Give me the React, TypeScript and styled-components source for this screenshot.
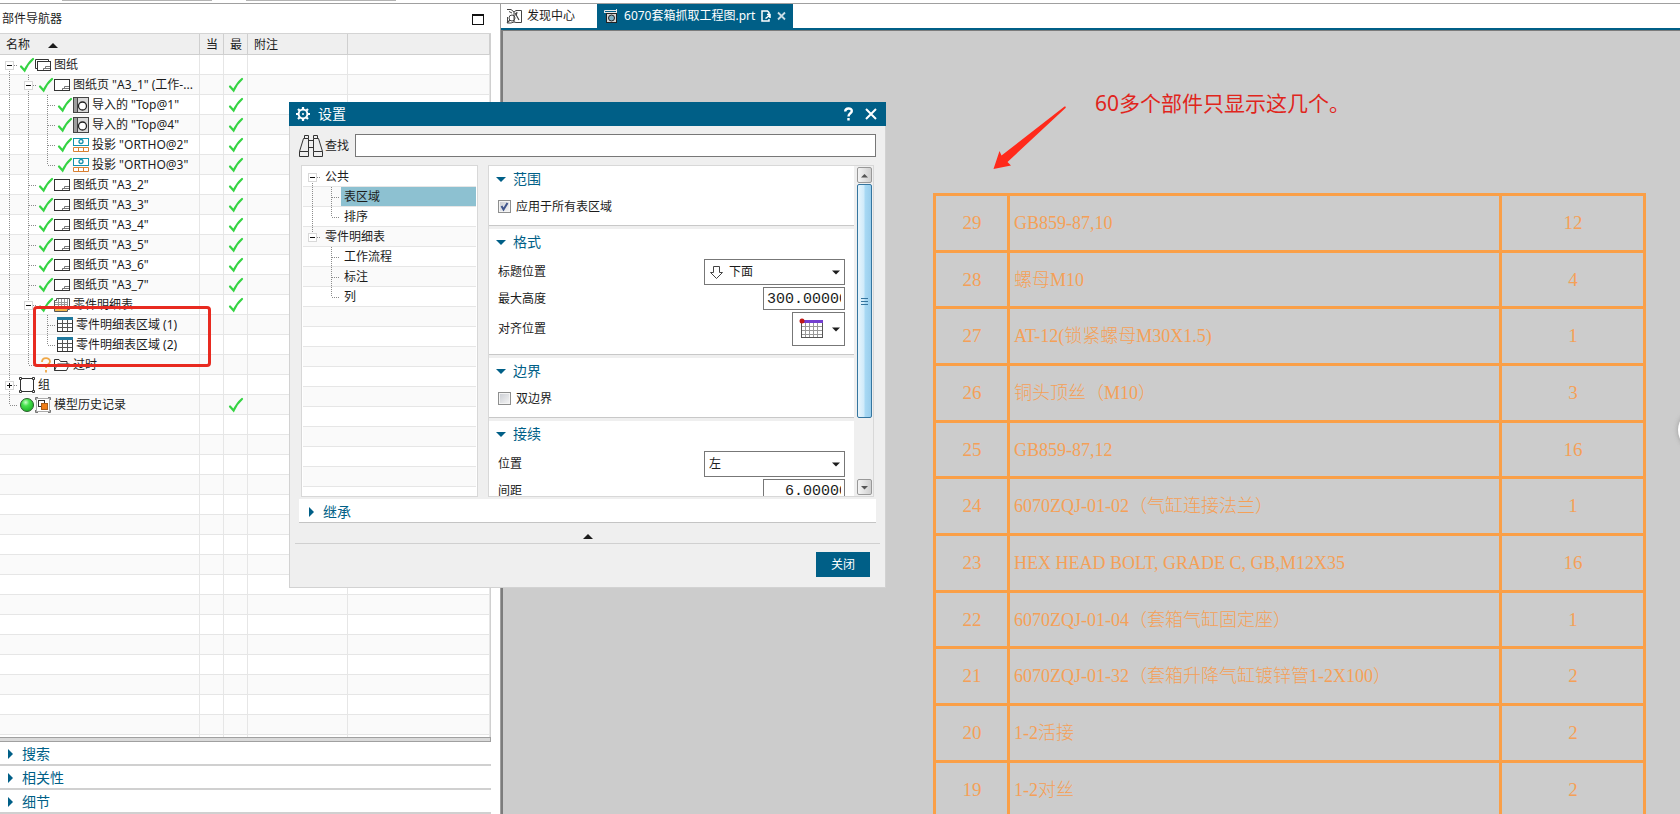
import React from 'react';
import styled, { createGlobalStyle } from 'styled-components';

const TEAL = '#005f87';
const INK = '#1c1c1c';
const UI_FONT = '"Noto Sans", "Noto Sans CJK SC", sans-serif';

const GlobalStyle = createGlobalStyle`
  * { box-sizing: border-box; }
  body {
    margin: 0;
    background: #fff;
    color: ${INK};
    font-family: ${UI_FONT};
    font-size: 12px;
    line-height: 16px;
    overflow: hidden;
  }
  button, input, select { font: inherit; color: inherit; }
  button { border: 0; padding: 0; background: none; }
  svg { display: block; flex: none; }
`;

/* ---------- frame ---------- */

const Page = styled.div`
  position: relative;
  display: flex;
  flex-direction: column;
  height: 100vh;
`;

const Ribbon = styled.div`
  display: flex;
  gap: 34px;
  flex: none;
  height: 4px;
  padding-left: 62px;
  border-bottom: 1px solid #a0a0a0;
`;

const RibbonGroup = styled.div`
  width: 150px;
  height: 1px;
  background: #b4b4b4;
`;

const Workspace = styled.div`
  display: flex;
  flex: 1;
  min-height: 0;
`;

/* ---------- icons ---------- */

const GreenCheck = () => (
  <svg width="16" height="16" viewBox="0 0 16 16" aria-hidden="true">
    <path d="M2 9.5 L5.6 13.5 C8 8.5 10.5 5 14 2" fill="none" stroke="#35d343" strokeWidth="2.2" strokeLinecap="round" />
  </svg>
);

const SheetIcon = () => (
  <svg width="16" height="16" viewBox="0 0 16 16" aria-hidden="true">
    <rect x="0.5" y="2.5" width="15" height="11" fill="#fff" stroke="#333" />
    <path d="M8.5 13V11.5H10.5V9.5H15M8.5 11.5H15" fill="none" stroke="#777" />
  </svg>
);

const SheetsIcon = () => (
  <svg width="16" height="16" viewBox="0 0 16 16" aria-hidden="true">
    <path d="M2.5 11.5H0.5V2.5H13.5V4" fill="none" stroke="#333" />
    <rect x="2.5" y="4.5" width="13" height="9" fill="#fff" stroke="#333" />
    <path d="M8.5 13V11.5H10.5V9.5H15M8.5 11.5H15" fill="none" stroke="#777" />
  </svg>
);

const ImportedIcon = () => (
  <svg width="16" height="16" viewBox="0 0 16 16" aria-hidden="true">
    <rect x="0.5" y="0.5" width="15" height="15" fill="#d9d9d9" stroke="#444" />
    <rect x="1" y="1" width="3" height="14" fill="#9e9e9e" />
    <path d="M4.5 1V15" stroke="#444" fill="none" />
    <circle cx="9.5" cy="9" r="4" fill="#fff" stroke="#222" strokeWidth="1.3" />
  </svg>
);

const ProjectionIcon = () => (
  <svg width="16" height="16" viewBox="0 0 16 16" aria-hidden="true">
    <rect x="0.5" y="1.5" width="15" height="7" fill="#fff" stroke="#1593ad" />
    <circle cx="8" cy="4.5" r="2" fill="#fff" stroke="#1593ad" strokeWidth="1.3" />
    <path d="M0.5 10.5H15.5V14.5H0.5ZM5.5 11V14.5M10.5 11V14.5" fill="#fff" stroke="#d98134" />
  </svg>
);

const PartsListIcon = () => (
  <svg width="16" height="16" viewBox="0 0 16 16" aria-hidden="true">
    <path d="M0.5 14.5V3.5H2.5V1.5H15.5V12.5H13.5V14.5Z" fill="#fff" stroke="#555" />
    <path d="M1 11H13V14H1Z" fill="#f0b54c" />
    <path d="M1 5.5H13M1 7.5H13M1 9.5H13M4.5 2V11M7.5 2V11M10.5 2V11M13.5 2V12" stroke="#999" fill="none" />
  </svg>
);

const GridIcon = () => (
  <svg width="16" height="16" viewBox="0 0 16 16" aria-hidden="true">
    <rect x="0.5" y="1.5" width="15" height="13" fill="#fff" stroke="#333" />
    <rect x="0" y="0" width="16" height="3" fill="#20789c" />
    <path d="M1 6.5H15M1 10.5H15M5.5 3V14M10.5 3V14" stroke="#555" fill="none" />
  </svg>
);

const FolderIcon = () => (
  <svg width="16" height="16" viewBox="0 0 16 16" aria-hidden="true">
    <path d="M0.5 13.5V2.5H5L6.5 4.5H13V7M0.5 13.5L3.5 7H15.5L12.5 13.5Z" fill="#fff" stroke="#333" />
  </svg>
);

const QuestionIcon = () => (
  <svg width="16" height="16" viewBox="0 0 16 16" aria-hidden="true">
    <path d="M4 5C4 0 12 0 12 4.5C12 7.5 8 7 8 11M8 13V15.5" fill="none" stroke="#f0a848" strokeWidth="1.8" />
  </svg>
);

const GroupIcon = () => (
  <svg width="16" height="16" viewBox="0 0 16 16" aria-hidden="true">
    <rect x="1.5" y="1.5" width="13" height="13" fill="#fff" stroke="#333" />
    <path d="M0.5 0.5H2.5V2.5H0.5ZM13.5 0.5H15.5V2.5H13.5ZM0.5 13.5H2.5V15.5H0.5ZM13.5 13.5H15.5V15.5H13.5Z" fill="#fff" stroke="#333" />
  </svg>
);

const GreenBallIcon = () => (
  <svg width="16" height="16" viewBox="0 0 16 16" aria-hidden="true">
    <defs>
      <radialGradient id="ball" cx="0.4" cy="0.3" r="0.7">
        <stop offset="0" stopColor="#c8ffc8" />
        <stop offset="0.4" stopColor="#45e24c" />
        <stop offset="1" stopColor="#1fb32b" />
      </radialGradient>
    </defs>
    <circle cx="8" cy="8" r="6.5" fill="url(#ball)" stroke="#2a5f2c" />
  </svg>
);

const HistoryIcon = () => (
  <svg width="16" height="16" viewBox="0 0 16 16" aria-hidden="true">
    <rect x="1.5" y="1.5" width="13" height="13" fill="#fff" stroke="#aaa" />
    <path d="M0.5 3V0.5H3M13 0.5H15.5V3M0.5 13V15.5H3M13 15.5H15.5V13" fill="none" stroke="#777" />
    <rect x="3.5" y="3.5" width="6" height="6" fill="#fff" stroke="#333" />
    <rect x="6.5" y="6.5" width="6" height="6" fill="#ef7d16" stroke="#a85a18" />
  </svg>
);

const Caret = ({ dir, color = INK, size = 10 }: { dir: 'up' | 'down' | 'right'; color?: string; size?: number }) => {
  const d = { up: 'M0 8L5 3L10 8Z', down: 'M0 3L5 8L10 3Z', right: 'M2 0L7 5L2 10Z' }[dir];
  return (
    <svg width={size} height={size} viewBox="0 0 10 10" aria-hidden="true">
      <path d={d} fill={color} />
    </svg>
  );
};

/* ---------- tree connectors ---------- */

type Guide = 'v' | 'tee' | 'elbow' | 'open-first' | 'open' | 'open-last' | 'closed';

const Toggle = styled.button`
  flex: none;
  width: 19px;
  height: 20px;
`;

const GuideLines = ({ kind }: { kind: Guide }) => {
  const box = kind.startsWith('open') || kind === 'closed';
  const up = kind !== 'open-first';
  const down = kind !== 'elbow' && kind !== 'open-last';
  return (
    <svg width="19" height="20" viewBox="0 0 19 20" aria-hidden="true">
      <g stroke="#8c8c8c" strokeDasharray="1 1" fill="none">
        {up && <path d="M9.5 0V10" />}
        {down && <path d="M9.5 10V20" />}
        {kind !== 'v' && <path d="M10 10.5H18" />}
      </g>
      {box && (
        <>
          <rect x="5.5" y="6.5" width="8" height="8" fill="#fff" stroke="#d8d8d8" />
          <path d={kind === 'closed' ? 'M7 10.5H12M9.5 8V13' : 'M7 10.5H12'} stroke="#111" fill="none" />
        </>
      )}
    </svg>
  );
};

const Connector = ({ kind }: { kind: Guide }) =>
  kind.startsWith('open') || kind === 'closed' ? (
    <Toggle type="button" aria-label={kind === 'closed' ? '展开' : '折叠'}>
      <GuideLines kind={kind} />
    </Toggle>
  ) : (
    <GuideLines kind={kind} />
  );

/* ---------- part navigator ---------- */

const Navigator = styled.aside`
  position: relative;
  display: flex;
  flex-direction: column;
  flex: none;
  width: 500px;
  padding-right: 9px;
`;

const NavTitle = styled.header`
  display: flex;
  align-items: center;
  justify-content: space-between;
  flex: none;
  height: 30px;
  padding: 1px 7px 0 2px;
  border-bottom: 1px solid #d4d4d4;
`;

const MaximizeButton = styled.button`
  width: 12px;
  height: 11px;
  border: 1px solid #111;
  border-top-width: 2px;
`;

const TreeArea = styled.div`
  flex: 1;
  min-height: 0;
  overflow: hidden;
  border-right: 1px solid #d0d0d0;
`;

const TreeTable = styled.table`
  width: 100%;
  table-layout: fixed;
  border-spacing: 0;
  col:nth-child(1) { width: 200px; }
  col:nth-child(2), col:nth-child(3) { width: 24px; }
  col:nth-child(4) { width: 100px; }
`;

const HeadCell = styled.th`
  height: 21px;
  padding: 0 6px;
  background: #efefef;
  box-shadow: inset -1px -1px #cfcfcf;
  font-weight: 400;
  text-align: left;
  white-space: nowrap;
`;

const SortHead = styled.div`
  display: flex;
  align-items: center;
  gap: 18px;
`;

const TreeRow = styled.tr`
  &:nth-child(even) { background: #fafafa; }
`;

const TreeCell = styled.td`
  height: 20px;
  padding: 0;
  box-shadow: inset -1px -1px #e6e6e6;
`;

const NameCell = styled.div`
  display: flex;
  align-items: center;
  height: 20px;
  white-space: nowrap;
`;

const NodeText = styled.span`
  padding-left: 3px;
`;

const Latest = styled.div`
  display: flex;
  justify-content: center;
`;

const Splitter = styled.div`
  flex: none;
  height: 5px;
  border: 1px solid #a0a0a0;
  border-width: 1px 1px 1px 0;
  background: #dadada;
`;

const FoldBar = styled.button`
  display: flex;
  align-items: center;
  gap: 6px;
  flex: none;
  height: 24px;
  padding: 2px 0 0 6px;
  border-bottom: 2px solid #d0d0d0;
  color: ${TEAL};
  font-size: 14px;
`;

const RedFrame = styled.div`
  position: absolute;
  left: 33px;
  top: 302px;
  width: 178px;
  height: 61px;
  border: 3px solid #e82a20;
  border-radius: 4px;
`;

type Node = { guides: Guide[]; icons: React.FC[]; text: string; latest?: boolean };

const sheet = (n: number): Node => ({
  guides: ['v', 'tee'],
  icons: [GreenCheck, SheetIcon],
  text: `图纸页 "A3_${n}"`,
  latest: true,
});

const nodes: Node[] = [
  { guides: ['open-first'], icons: [GreenCheck, SheetsIcon], text: '图纸' },
  { guides: ['v', 'open'], icons: [GreenCheck, SheetIcon], text: '图纸页 "A3_1" (工作-...', latest: true },
  { guides: ['v', 'v', 'tee'], icons: [GreenCheck, ImportedIcon], text: '导入的 "Top@1"', latest: true },
  { guides: ['v', 'v', 'tee'], icons: [GreenCheck, ImportedIcon], text: '导入的 "Top@4"', latest: true },
  { guides: ['v', 'v', 'tee'], icons: [GreenCheck, ProjectionIcon], text: '投影 "ORTHO@2"', latest: true },
  { guides: ['v', 'v', 'elbow'], icons: [GreenCheck, ProjectionIcon], text: '投影 "ORTHO@3"', latest: true },
  ...[2, 3, 4, 5, 6, 7].map(sheet),
  { guides: ['v', 'open'], icons: [GreenCheck, PartsListIcon], text: '零件明细表', latest: true },
  { guides: ['v', 'v', 'tee'], icons: [GridIcon], text: '零件明细表区域 (1)' },
  { guides: ['v', 'v', 'elbow'], icons: [GridIcon], text: '零件明细表区域 (2)' },
  { guides: ['v', 'elbow'], icons: [QuestionIcon, FolderIcon], text: '过时' },
  { guides: ['closed'], icons: [GroupIcon], text: '组' },
  { guides: ['elbow'], icons: [GreenBallIcon, HistoryIcon], text: '模型历史记录', latest: true },
];

const EMPTY_ROWS = 40;

const PartNavigator = () => (
  <Navigator>
    <NavTitle>
      部件导航器
      <MaximizeButton type="button" aria-label="最大化" />
    </NavTitle>
    <TreeArea>
      <TreeTable>
        <colgroup><col /><col /><col /><col /><col /></colgroup>
        <thead>
          <tr>
            <HeadCell><SortHead>名称<Caret dir="up" /></SortHead></HeadCell>
            <HeadCell>当</HeadCell>
            <HeadCell>最</HeadCell>
            <HeadCell>附注</HeadCell>
            <HeadCell />
          </tr>
        </thead>
        <tbody>
          {nodes.map((node) => (
            <TreeRow key={node.text}>
              <TreeCell>
                <NameCell>
                  {node.guides.map((kind, i) => <Connector key={i} kind={kind} />)}
                  {node.icons.map((Icon, i) => <Icon key={i} />)}
                  <NodeText>{node.text}</NodeText>
                </NameCell>
              </TreeCell>
              <TreeCell />
              <TreeCell>{node.latest && <Latest><GreenCheck /></Latest>}</TreeCell>
              <TreeCell />
              <TreeCell />
            </TreeRow>
          ))}
          {Array.from({ length: EMPTY_ROWS }, (_, i) => (
            <TreeRow key={i}><TreeCell /><TreeCell /><TreeCell /><TreeCell /><TreeCell /></TreeRow>
          ))}
        </tbody>
      </TreeTable>
    </TreeArea>
    <Splitter />
    {['搜索', '相关性', '细节'].map((name) => (
      <FoldBar key={name} type="button"><Caret dir="right" color={TEAL} />{name}</FoldBar>
    ))}
    <RedFrame />
  </Navigator>
);

/* ---------- drawing window ---------- */

const DrawingWindow = styled.main`
  display: flex;
  flex-direction: column;
  flex: 1;
  min-width: 0;
  border-left: 1px solid #a0a0a0;
`;

const TabBar = styled.nav`
  display: flex;
  flex: none;
  height: 26px;
  border-bottom: 2px solid ${TEAL};
`;

const Tab = styled.button<{ $active?: boolean }>`
  display: flex;
  align-items: center;
  gap: ${(p) => (p.$active ? 6 : 4)}px;
  padding: 0 ${(p) => (p.$active ? 7 : 22)}px 0 ${(p) => (p.$active ? 7 : 5)}px;
  background: ${(p) => (p.$active ? TEAL : '#fff')};
  color: ${(p) => (p.$active ? '#fff' : INK)};
`;

const Canvas = styled.div`
  position: relative;
  flex: 1;
  min-height: 0;
  overflow: hidden;
  padding: 162px 34px 0 430px;
  border: 1px solid #7c7c7c;
  border-width: 1px 0 0 2px;
  background: #ccc;
`;

const BomTable = styled.table`
  width: 100%;
  table-layout: fixed;
  border-collapse: collapse;
  color: #f5a057;
  font-family: "Liberation Serif", "Noto Sans CJK SC", serif;
  font-size: 18px;
  font-weight: 300;
  line-height: 24px;
  col:first-child { width: 74px; }
  col:last-child { width: 144px; }
  tr { height: 57px; }
  tr:nth-child(3n + 2) { height: 56px; }
`;

const BomCell = styled.td<{ $number?: boolean }>`
  padding: 0 0 0 ${(p) => (p.$number ? 1 : 4)}px;
  border: 3px solid #fa9f47;
  font-size: ${(p) => (p.$number ? 19 : 18)}px;
  text-align: ${(p) => (p.$number ? 'center' : 'left')};
  white-space: nowrap;
`;

const Note = styled.p`
  position: absolute;
  left: 592px;
  top: 58px;
  margin: 0;
  color: #e0251c;
  font-size: 21px;
  line-height: 28px;
`;

const Arrow = styled.svg`
  position: absolute;
  left: 490px;
  top: 75px;
`;

const EdgeKnob = styled.button`
  position: absolute;
  right: -38px;
  top: 379px;
  width: 40px;
  height: 40px;
  border-radius: 50%;
  background: #fff;
  box-shadow: 0 0 5px #999;
`;

const bom: [number, string, number][] = [
  [29, 'GB859-87,10', 12],
  [28, '螺母M10', 4],
  [27, 'AT-12(锁紧螺母M30X1.5)', 1],
  [26, '铜头顶丝（M10）', 3],
  [25, 'GB859-87,12', 16],
  [24, '6070ZQJ-01-02（气缸连接法兰）', 1],
  [23, 'HEX HEAD BOLT, GRADE C, GB,M12X35', 16],
  [22, '6070ZQJ-01-04（套箱气缸固定座）', 1],
  [21, '6070ZQJ-01-32（套箱升降气缸镀锌管1-2X100）', 2],
  [20, '1-2活接', 2],
  [19, '1-2对丝', 2],
];

const Drawing = () => (
  <DrawingWindow>
    <TabBar>
      <Tab type="button">
        <svg width="17" height="16" viewBox="0 0 17 16" fill="none" stroke="#444" aria-hidden="true">
          <path d="M1 1.5H5L8 4V14L5 15H1.5V9M8 4L10 2.5H15.5V14.5H10L8 14M3 3.5L6 5" />
          <circle cx="6" cy="10" r="3" />
          <path d="M4 12L1 15M9 5L13 12M11 4L10 8" strokeWidth="1.2" />
        </svg>
        发现中心
      </Tab>
      <Tab type="button" $active>
        <svg width="14" height="16" viewBox="0 0 14 16" aria-hidden="true">
          <path d="M0.5 5V2.5H13M1 4.5H12M12.5 1V5" stroke="#e8e8e8" fill="none" />
          <rect x="2.5" y="5.5" width="10" height="9" fill="#d6d6d6" stroke="#222" />
          <circle cx="7.5" cy="10" r="3" fill="#7fb3c6" stroke="#222" />
        </svg>
        6070套箱抓取工程图.prt
        <svg width="10" height="12" viewBox="0 0 10 12" fill="none" stroke="#fff" strokeWidth="1.5" aria-hidden="true">
          <path d="M8 4V2.5L6.5 1H1V11H8V9M4.5 8.5L8.5 5.5M6 4.5H9V8" />
        </svg>
        <svg width="9" height="10" viewBox="0 0 9 10" stroke="#c9dde6" strokeWidth="1.8" aria-hidden="true">
          <path d="M1 1.5L8 8.5M8 1.5L1 8.5" />
        </svg>
      </Tab>
    </TabBar>
    <Canvas>
      <BomTable>
        <colgroup><col /><col /><col /></colgroup>
        <tbody>
          {bom.map(([no, name, qty]) => (
            <tr key={no}>
              <BomCell $number>{no}</BomCell>
              <BomCell>{name}</BomCell>
              <BomCell $number>{qty}</BomCell>
            </tr>
          ))}
        </tbody>
      </BomTable>
      <Arrow width="74" height="64" viewBox="0 0 74 64" aria-hidden="true">
        <path d="M0.5 63L6.5 45L8.5 49.5L71.5 0.5Q73.5 0 72.5 2L14.5 56L18 59.5Z" fill="#ff2a1b" />
      </Arrow>
      <Note>60多个部件只显示这几个。</Note>
      <EdgeKnob type="button" aria-label="资源条" />
    </Canvas>
  </DrawingWindow>
);

/* ---------- settings dialog ---------- */

const Dialog = styled.section`
  position: absolute;
  left: 289px;
  top: 102px;
  width: 597px;
  border: 1px solid #d2d2d2;
  border-top: 0;
  background: #efefef;
`;

const DialogBar = styled.header`
  display: flex;
  align-items: center;
  height: 24px;
  margin: 0 -1px;
  padding: 0 9px 0 7px;
  background: ${TEAL};
  color: #fff;
`;

const DialogTitle = styled.h2`
  flex: 1;
  margin: 0 0 0 8px;
  font-size: 14px;
  font-weight: 400;
`;

const BarButton = styled.button`
  margin-left: 12px;
`;

const DialogBody = styled.div`
  padding: 8px 9px 0;
`;

const SearchRow = styled.div`
  display: flex;
  align-items: center;
  height: 23px;
`;

const SearchLabel = styled.label`
  display: flex;
  align-items: center;
  gap: 2px;
  margin-right: 6px;
`;

const SearchInput = styled.input`
  flex: 1;
  height: 23px;
  border: 1px solid #777;
  background: #fff;
`;

const Panes = styled.div`
  display: flex;
  gap: 10px;
  height: 332px;
  margin: 8px 2px 2px;
`;

const Pane = styled.div<{ $wide?: boolean }>`
  display: flex;
  flex: ${(p) => (p.$wide ? '1' : '0 0 177px')};
  gap: 3px;
  overflow: hidden;
  padding: ${(p) => (p.$wide ? '0 1px 0 0' : '1px 1px 0')};
  border: 1px solid #d8d8d8;
  background: ${(p) => (p.$wide ? '#efefef' : '#fff')};
`;

const TopicList = styled.ul`
  flex: 1;
  margin: 0;
  padding: 0;
  list-style: none;
`;

const Topic = styled.li`
  display: flex;
  height: 20px;
  box-shadow: inset 0 -1px #e6e6e6;
  &:nth-child(even) { background: #fafafa; }
`;

const TopicName = styled.button<{ $selected?: boolean }>`
  flex: 1;
  height: 19px;
  padding-left: 3px;
  background: ${(p) => (p.$selected ? '#8dc1d1' : 'none')};
  text-align: left;
`;

const Groups = styled.div`
  display: flex;
  flex: 1;
  flex-direction: column;
  gap: 3px;
  overflow: hidden;
`;

const GroupBox = styled.section`
  flex: none;
  border-bottom: 1px solid #c8c8c8;
  background: #fff;
`;

const GroupTitle = styled.button`
  display: flex;
  align-items: center;
  gap: 7px;
  height: 26px;
  padding-left: 7px;
  color: ${TEAL};
  font-size: 14px;
`;

const GroupBody = styled.div`
  display: flex;
  flex-direction: column;
  gap: 2px;
  padding: 4px 9px 8px;
`;

const Field = styled.div`
  display: flex;
  align-items: center;
  justify-content: space-between;
`;

const CheckRow = styled.label`
  display: grid;
  grid-template-columns: 13px auto;
  align-items: center;
  gap: 5px;
  height: 21px;
  svg { grid-area: 1 / 1; visibility: hidden; pointer-events: none; }
  input:checked + svg { visibility: visible; }
`;

const CheckBox = styled.input`
  grid-area: 1 / 1;
  appearance: none;
  width: 13px;
  height: 13px;
  margin: 0;
  border: 1px solid #8e8f8f;
  background: linear-gradient(135deg, #c9ccd2, #f6f6f6);
  box-shadow: inset 0 0 0 1px #f4f4f4;
`;

const SelectBox = styled.div`
  display: flex;
  align-items: center;
  gap: 5px;
  width: 141px;
  height: 26px;
  padding: 0 4px;
  border: 1px solid #777;
  background: #fff;
`;

const Select = styled.select`
  flex: 1;
  min-width: 0;
  height: 24px;
  padding: 0;
  border: 0;
  appearance: none;
  background: none;
`;

const NumberInput = styled.input`
  width: 82px;
  height: 23px;
  padding: 2px 3px 0;
  border: 1px solid #777;
  background: #fff;
  font-family: "Liberation Mono", monospace;
  font-size: 15px;
`;

const PickButton = styled.button`
  display: flex;
  align-items: center;
  justify-content: space-between;
  width: 53px;
  height: 34px;
  padding: 0 4px 0 6px;
  border: 1px solid #777;
  background: #fff;
`;

const ScrollTrack = styled.div`
  display: flex;
  flex-direction: column;
  flex: none;
  width: 15px;
  padding: 1px 0;
`;

const ScrollButton = styled.button`
  display: flex;
  align-items: center;
  justify-content: center;
  height: 16px;
  border: 1px solid #989898;
  border-radius: 2px;
  background: linear-gradient(90deg, #f4f4f4, #cfcfcf);
`;

const ScrollThumb = styled.div`
  display: flex;
  flex-direction: column;
  align-items: center;
  justify-content: center;
  gap: 2px;
  height: 234px;
  margin: 1px 0 auto;
  border: 1px solid #34759f;
  border-radius: 2px;
  background: linear-gradient(90deg, #e8f5fc 0%, #d0ebfa 45%, #a8d9f4 55%, #98cdec 100%);
`;

const Grip = styled.i`
  width: 7px;
  height: 1px;
  background: #34759f;
`;

const InheritBar = styled.button`
  display: flex;
  align-items: center;
  gap: 6px;
  width: 100%;
  height: 24px;
  padding: 2px 0 0 8px;
  border-bottom: 1px solid #c4c4c4;
  background: #fff;
  color: ${TEAL};
  font-size: 14px;
`;

const Collapse = styled.button`
  display: flex;
  justify-content: center;
  width: 100%;
  height: 20px;
  padding-top: 8px;
`;

const DialogFooter = styled.footer`
  display: flex;
  justify-content: flex-end;
  margin: 0 5px;
  padding: 8px 10px 10px;
  border-top: 1px solid #d0d0d0;
`;

const CloseButton = styled.button`
  width: 54px;
  height: 25px;
  background: ${TEAL};
  color: #fff;
`;

const topics: { guides: Guide[]; text: string; selected?: boolean }[] = [
  { guides: ['open-first'], text: '公共' },
  { guides: ['v', 'tee'], text: '表区域', selected: true },
  { guides: ['v', 'elbow'], text: '排序' },
  { guides: ['open-last'], text: '零件明细表' },
  { guides: ['tee'], text: '工作流程' },
  { guides: ['tee'], text: '标注' },
  { guides: ['elbow'], text: '列' },
];

const Indent = styled.span`
  width: 19px;
`;

const Group = ({ title, children }: { title: string; children: React.ReactNode }) => (
  <GroupBox>
    <GroupTitle type="button"><Caret dir="down" color={TEAL} />{title}</GroupTitle>
    <GroupBody>{children}</GroupBody>
  </GroupBox>
);

const Check = ({ label, checked }: { label: string; checked?: boolean }) => (
  <CheckRow>
    <CheckBox type="checkbox" defaultChecked={checked} />
    <svg width="13" height="13" viewBox="0 0 13 13" aria-hidden="true">
      <path d="M3.5 6L5.5 9.5L9.5 3" fill="none" stroke="#40558c" strokeWidth="2" />
    </svg>
    {label}
  </CheckRow>
);

const SettingsDialog = () => (
  <Dialog role="dialog" aria-labelledby="settings-title">
    <DialogBar>
      <svg width="14" height="14" viewBox="0 0 14 14" fill="none" stroke="#fff" aria-hidden="true">
        <circle cx="7" cy="7" r="4.4" strokeWidth="2" />
        <circle cx="7" cy="7" r="0.6" fill="#fff" />
        <path d="M7 0V2M7 12V14M0 7H2M12 7H14M2 2L3.5 3.5M10.5 10.5L12 12M12 2L10.5 3.5M3.5 10.5L2 12" strokeWidth="2.2" />
      </svg>
      <DialogTitle id="settings-title">设置</DialogTitle>
      <BarButton type="button" aria-label="帮助">
        <svg width="9" height="14" viewBox="0 0 9 14" fill="none" stroke="#fff" strokeWidth="2.4" aria-hidden="true">
          <path d="M1.2 4.5C1.2 0.5 7.8 0.5 7.8 4C7.8 6.5 4.5 6 4.5 9.5M4.5 11V13.5" />
        </svg>
      </BarButton>
      <BarButton type="button" aria-label="关闭窗口">
        <svg width="12" height="12" viewBox="0 0 12 12" stroke="#fff" strokeWidth="2" aria-hidden="true">
          <path d="M1 1L11 11M11 1L1 11" />
        </svg>
      </BarButton>
    </DialogBar>
    <DialogBody>
      <SearchRow>
        <SearchLabel htmlFor="find">
          <svg width="24" height="22" viewBox="0 0 24 22" fill="none" stroke="#333" aria-hidden="true">
            <path d="M0.5 16.5L4.5 3.5H9.5V16.5M0.5 16.5H9.5V21.5H0.5ZM5.5 3.5V0.5H9.5V3.5M23.5 16.5L19.5 3.5H14.5V16.5M23.5 16.5H14.5V21.5H23.5ZM18.5 3.5V0.5H14.5V3.5M9.5 5.5H14.5M9.5 12.5H14.5" />
          </svg>
          查找
        </SearchLabel>
        <SearchInput id="find" type="text" />
      </SearchRow>
      <Panes>
        <Pane>
          <TopicList>
            {topics.map((topic, i) => (
              <Topic key={topic.text}>
                {i > 3 && <Indent />}
                {topic.guides.map((kind, k) => <Connector key={k} kind={kind} />)}
                <TopicName type="button" $selected={topic.selected}>{topic.text}</TopicName>
              </Topic>
            ))}
            {Array.from({ length: 10 }, (_, i) => <Topic key={i} />)}
          </TopicList>
        </Pane>
        <Pane $wide>
          <Groups>
            <Group title="范围">
              <Check label="应用于所有表区域" checked />
            </Group>
            <Group title="格式">
              <Field>
                <label htmlFor="header-place">标题位置</label>
                <SelectBox>
                  <svg width="15" height="15" viewBox="0 0 15 15" fill="#fff" stroke="#444" aria-hidden="true">
                    <path d="M4.5 1.5H10.5V7.5H13.5L7.5 13.5L1.5 7.5H4.5Z" />
                  </svg>
                  <Select id="header-place"><option>下面</option></Select>
                  <Caret dir="down" size={8} />
                </SelectBox>
              </Field>
              <Field>
                <label htmlFor="max-height">最大高度</label>
                <NumberInput id="max-height" type="text" defaultValue="300.000000" />
              </Field>
              <Field>
                <label htmlFor="align-place">对齐位置</label>
                <PickButton id="align-place" type="button">
                  <svg width="26" height="22" viewBox="0 0 26 22" aria-hidden="true">
                    <rect x="2.5" y="2.5" width="21" height="17" fill="#fff" stroke="#555" />
                    <path d="M3 8.5H23M3 12.5H23M3 16.5H23M6.5 5V19M10.5 5V19M14.5 5V19M18.5 5V19" stroke="#999" />
                    <rect x="2" y="2" width="22" height="3" fill="#7440d0" />
                    <circle cx="3" cy="3" r="2.5" fill="#c01818" />
                  </svg>
                  <Caret dir="down" size={8} />
                </PickButton>
              </Field>
            </Group>
            <Group title="边界">
              <Check label="双边界" />
            </Group>
            <Group title="接续">
              <Field>
                <label htmlFor="place">位置</label>
                <SelectBox>
                  <Select id="place"><option>左</option></Select>
                  <Caret dir="down" size={8} />
                </SelectBox>
              </Field>
              <Field>
                <label htmlFor="spacing">间距</label>
                <NumberInput id="spacing" type="text" defaultValue="  6.000000" />
              </Field>
            </Group>
          </Groups>
          <ScrollTrack>
            <ScrollButton type="button" aria-label="向上滚动"><Caret dir="up" color="#555" size={7} /></ScrollButton>
            <ScrollThumb><Grip /><Grip /><Grip /></ScrollThumb>
            <ScrollButton type="button" aria-label="向下滚动"><Caret dir="down" color="#555" size={7} /></ScrollButton>
          </ScrollTrack>
        </Pane>
      </Panes>
      <InheritBar type="button"><Caret dir="right" color={TEAL} />继承</InheritBar>
      <Collapse type="button" aria-label="收起"><Caret dir="up" /></Collapse>
    </DialogBody>
    <DialogFooter>
      <CloseButton type="button">关闭</CloseButton>
    </DialogFooter>
  </Dialog>
);

const App = () => (
  <>
    <GlobalStyle />
    <Page>
      <Ribbon><RibbonGroup /><RibbonGroup /></Ribbon>
      <Workspace>
        <PartNavigator />
        <Drawing />
      </Workspace>
      <SettingsDialog />
    </Page>
  </>
);

export default App;
